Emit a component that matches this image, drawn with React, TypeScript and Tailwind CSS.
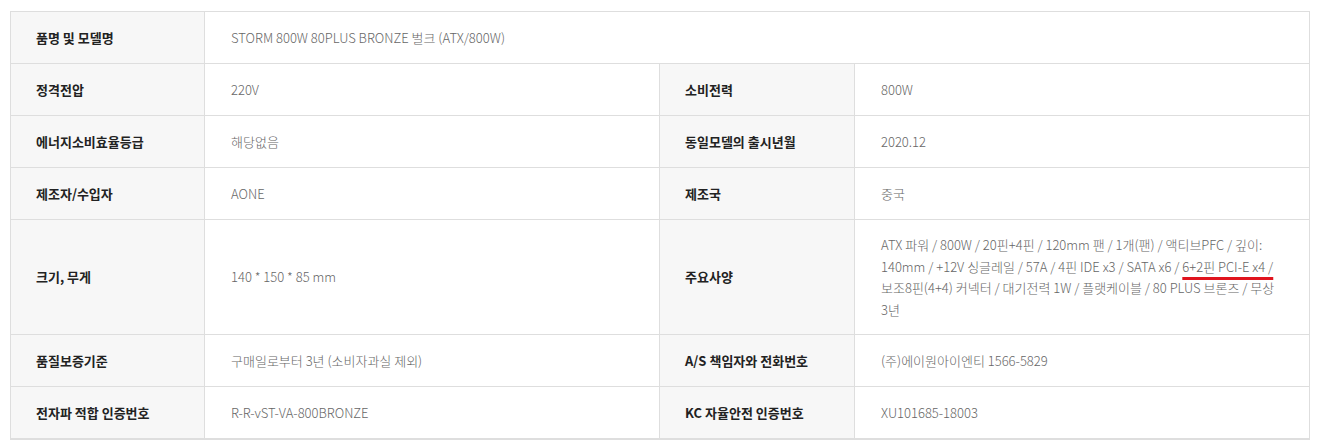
import React from "react";

type Cell = { label: string; value: React.ReactNode };

const rows: { left: Cell; right?: Cell; tall?: boolean }[] = [
  { left: { label: "품명 및 모델명", value: "STORM 800W 80PLUS BRONZE 벌크 (ATX/800W)" } },
  { left: { label: "정격전압", value: "220V" }, right: { label: "소비전력", value: "800W" } },
  { left: { label: "에너지소비효율등급", value: "해당없음" }, right: { label: "동일모델의 출시년월", value: "2020.12" } },
  { left: { label: "제조자/수입자", value: "AONE" }, right: { label: "제조국", value: "중국" } },
  {
    tall: true,
    left: { label: "크기, 무게", value: "140 * 150 * 85 mm" },
    right: {
      label: "주요사양",
      value: (
        <>
          ATX 파워 / 800W / 20핀+4핀 / 120mm 팬 / 1개(팬) / 액티브PFC / 깊이: 140mm / +12V 싱글레일 / 57A / 4핀 IDE x3 / SATA x6 /{" "}
          <span className="underline decoration-[#e0141e] decoration-[3px] underline-offset-[5px]">6+2핀 PCI-E x4 /</span>{" "}
          보조8핀(4+4) 커넥터 / 대기전력 1W / 플랫케이블 / 80 PLUS 브론즈 / 무상 3년
        </>
      ),
    },
  },
  { left: { label: "품질보증기준", value: "구매일로부터 3년 (소비자과실 제외)" }, right: { label: "A/S 책임자와 전화번호", value: "(주)에이원아이엔티 1566-5829" } },
  { left: { label: "전자파 적합 인증번호", value: "R-R-vST-VA-800BRONZE" }, right: { label: "KC 자율안전 인증번호", value: "XU101685-18003" } },
];

const th = "border border-[#dedede] bg-[#f7f7f7] pl-[25px] pr-4 text-left align-middle font-bold text-[#222]";
const td = "border border-[#dedede] bg-white pl-[26px] pr-[22px] text-left align-middle font-light text-[#666] break-keep";

export default function App() {
  return (
    <div
      className="min-h-[446px] w-[1319px] bg-white pl-[10px] pt-[11px] text-[13px]"
      style={{ fontFamily: '"Noto Sans CJK KR", "Noto Sans", sans-serif' }}
    >
      <table className="w-[1300px] table-fixed border-collapse border-b-2 border-b-[#dedede]">
        <colgroup>
          <col className="w-[194px]" />
          <col className="w-[455px]" />
          <col className="w-[195px]" />
          <col className="w-[455px]" />
        </colgroup>
        <tbody>
          {rows.map((r, i) => (
            <tr key={i} className={r.tall ? "h-[115px]" : "h-[52px]"}>
              <th className={th}>{r.left.label}</th>
              <td className={td} colSpan={r.right ? 1 : 3}>
                {r.left.value}
              </td>
              {r.right && (
                <>
                  <th className={th}>{r.right.label}</th>
                  <td className={`${td} leading-[21.5px]`}>{r.right.value}</td>
                </>
              )}
            </tr>
          ))}
        </tbody>
      </table>
    </div>
  );
}
